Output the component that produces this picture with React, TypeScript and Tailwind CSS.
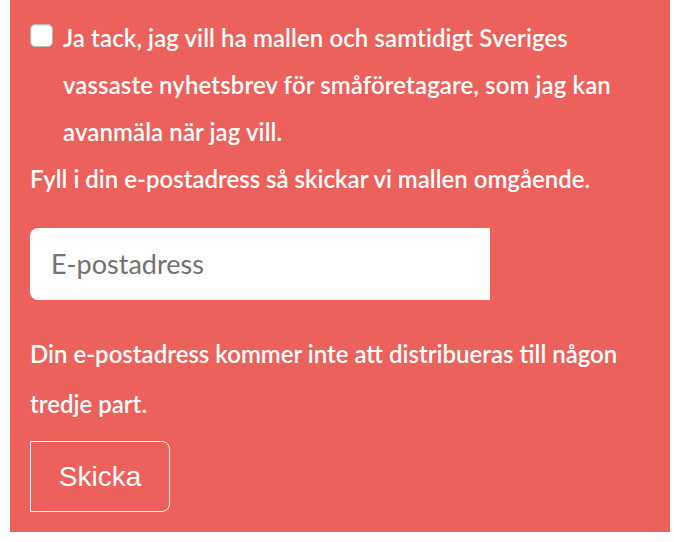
import React from 'react'

export default function App() {
  return (
    <div className="w-[674px] h-[542px] bg-white">
      <form
        className="ml-[10px] w-[660px] h-[532px] bg-[#ec615c] px-[20px] pt-[14px] pb-[21px] text-white"
        style={{ fontFamily: 'Lato, "Open Sans", sans-serif' }}
        onSubmit={(e) => e.preventDefault()}
      >
        <label className="flex items-start gap-[10px] text-[24px] leading-[47px] font-semibold tracking-[0.1px]">
          <span className="mt-[10px] w-[23px] h-[23px] shrink-0 rounded-[5px] bg-white border border-[#b9b9b9] shadow-[inset_0_1px_2px_rgba(0,0,0,0.15)]" />
          <span>
            Ja tack, jag vill ha mallen och samtidigt Sveriges vassaste nyhetsbrev för småföretagare, som jag kan
            avanmäla när jag vill.
          </span>
        </label>
        <p className="text-[24px] leading-[47px] font-semibold">Fyll i din e-postadress så skickar vi mallen omgående.</p>

        <div className="mt-[26px] w-[460px] h-[72px] bg-white rounded-l-[8px] flex items-center pl-[21px]">
          <input
            className="w-full bg-transparent outline-none text-[27px] text-[#333] placeholder:text-[#727272]"
            placeholder="E-postadress"
            style={{ fontFamily: 'Lato, "Open Sans", sans-serif' }}
          />
        </div>

        <p className="mt-[29px] text-[24px] leading-[50px] font-semibold">
          Din e-postadress kommer inte att distribueras till någon tredje part.
        </p>

        <button
          type="submit"
          className="mt-[12px] w-[140px] h-[71px] border-[1.5px] border-white rounded-r-[8px] text-[28px] text-white"
          style={{ fontFamily: '"Liberation Sans", Arial, sans-serif' }}
        >
          Skicka
        </button>
      </form>
    </div>
  )
}
